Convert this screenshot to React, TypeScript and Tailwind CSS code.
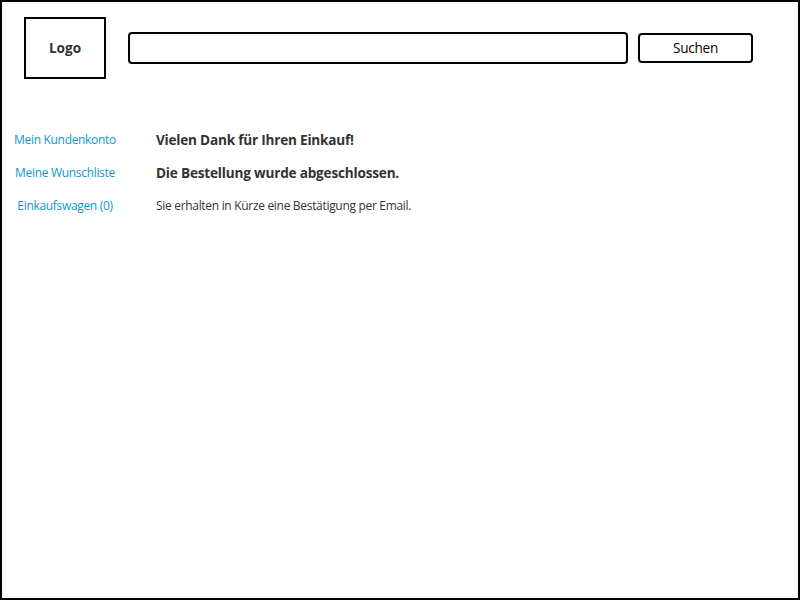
const links = ["Mein Kundenkonto", "Meine Wunschliste", "Einkaufswagen (0)"];

export default function App() {
  return (
    <div className="h-[600px] w-[800px] border-2 border-black bg-white font-['Open_Sans','Noto_Sans',sans-serif] text-[#333333]">
      <header className="flex pl-[22px] pt-[15px]">
        <div className="flex h-[62px] w-[82px] items-center justify-center border-2 border-black pt-px text-[13.6px] font-bold">Logo</div>
        <input aria-label="Suche" className="ml-[22px] mt-[15px] h-8 w-[500px] rounded-[4px] border-2 border-black px-2 outline-none" />
        <button className="ml-[10px] mt-4 flex h-[30px] w-[115px] items-center justify-center rounded-[4px] border-2 border-black pt-px text-[13.6px] tracking-[-0.25px] text-black">Suchen</button>
      </header>
      <div className="flex pt-[44px]">
        <nav className="mr-[28px] flex w-[126px] flex-col items-center whitespace-nowrap text-[12px] leading-[33px] tracking-[-0.32px] text-[#0d99cc]">
          {links.map((label) => (
            <a key={label} href="#">{label}</a>
          ))}
        </nav>
        <main className="whitespace-nowrap text-[13.6px] leading-[33px]">
          <h1 className="font-bold tracking-[-0.22px]">Vielen Dank für Ihren Einkauf!</h1>
          <h2 className="font-bold tracking-[-0.2px]">Die Bestellung wurde abgeschlossen.</h2>
          <p className="text-[12px] tracking-[-0.31px]">Sie erhalten in Kürze eine Bestätigung per Email.</p>
        </main>
      </div>
    </div>
  );
}
